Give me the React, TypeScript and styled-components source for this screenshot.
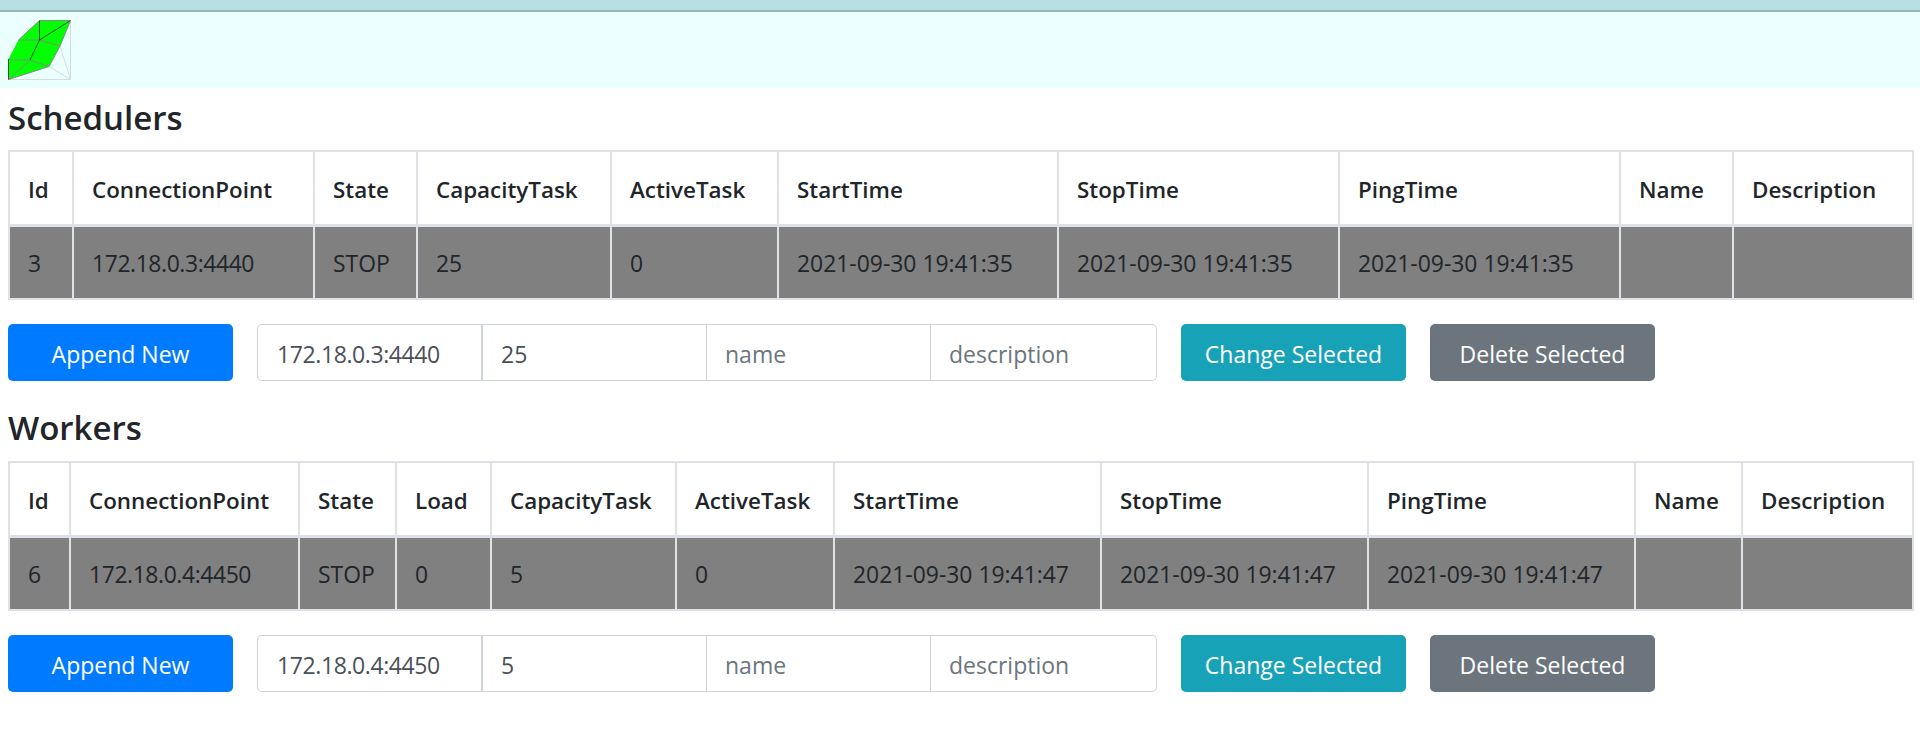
import React from 'react'
import styled, { createGlobalStyle } from 'styled-components'

const GlobalStyle = createGlobalStyle`
  html, body {
    margin: 0;
    padding: 0;
    background: #fff;
    color: #212529;
    font-family: "Open Sans", "Noto Sans", sans-serif;
    font-size: 19.2px;
    line-height: 1.5;
  }
  * { box-sizing: border-box; }
`

const TopStrip = styled.div`
  height: 12px;
  background: #b8e0e4;
  border-bottom: 2px solid #95b5ba;
`

const Header = styled.header`
  height: 76px;
  padding: 8px 8px 0;
  background: #ebffff;
`

const Content = styled.main`
  padding: 0 8px;
`

const Title = styled.h3`
  margin: 0;
  height: 62px;
  padding-top: 6px;
  font-size: 33px;
  line-height: 48px;
  font-weight: 600;
`

const WorkersTitle = styled(Title)`
  height: 80px;
  padding-top: 23px;
`

const Table = styled.table`
  width: 1904px;
  table-layout: fixed;
  border-collapse: collapse;
  border: 2px solid #dee2e6;
`

const HeadCell = styled.th`
  height: 74px;
  padding: 5px 18px 0;
  border: 2px solid #dee2e6;
  border-bottom-width: 3px;
  text-align: left;
  font-size: 22.4px;
  font-weight: 600;
  white-space: nowrap;
`

const Cell = styled.td<{ $tight?: boolean }>`
  height: 74px;
  padding: 4px 18px 0;
  border: 2px solid #dee2e6;
  background: #808080;
  font-size: 22.9px;
  letter-spacing: ${p => (p.$tight ? '-0.4px' : 'normal')};
  white-space: nowrap;
`

const Controls = styled.div`
  display: flex;
  align-items: stretch;
  height: 57px;
  margin-top: 24px;
`

const Button = styled.button<{ $bg: string }>`
  width: 225px;
  padding: 3px 0 0;
  border: none;
  border-radius: 5px;
  background: ${p => p.$bg};
  color: #fff;
  font: inherit;
  font-size: 23px;
`

const InputGroup = styled.div`
  display: flex;
  width: 900px;
  margin: 0 24px;
`

const Input = styled.input<{ $width: number }>`
  width: ${p => p.$width}px;
  height: 100%;
  padding: 2px 18px 0;
  border: 1px solid #ced4da;
  border-left-width: 0;
  background: #fff;
  color: #495057;
  font: inherit;
  font-size: 23px;
  outline: none;

  &:first-child {
    padding-left: 19px;
    border-left-width: 1px;
    border-right-width: 2px;
    border-radius: 5px 0 0 5px;
    letter-spacing: -0.4px;
  }

  &:last-child {
    border-radius: 0 5px 5px 0;
  }

  &::placeholder {
    color: #6c757d;
    opacity: 1;
  }
`

const SecondButton = styled(Button)`
  margin-left: 24px;
`

const Logo = () => (
  <svg width="64" height="62" viewBox="0 0 64 62">
    <path d="M31.5 .5 H62.5 L52 26 L41 46.5 L.5 59.5 V39 L10.5 20 Z" fill="#00ff00" />
    <path
      d="M62.5 .5 V59.5 H.5 M52 26 L62.5 59.5 M41 46.5 L62.5 59.5"
      fill="none"
      stroke="#d6dcdc"
    />
    <path
      d="M31.5 .5 H62.5 L52 26 L41 46.5 L.5 59.5 M10.5 20 H31.5 L52 26 M.5 40 H22 L41 46.5 M22 40 L.5 59.5 M10.5 20 L31.5 .5"
      fill="none"
      stroke="#7d8f7d"
    />
    <path
      d="M31.5 .5 V20 L62.5 .5 M31.5 20 L22 40 M.5 59.5 V39"
      fill="none"
      stroke="#3d4a3d"
    />
  </svg>
)

type Column = { label: string; width: number }

type SectionProps = {
  columns: Column[]
  values: string[]
  address: string
  capacity: string
}

const Section = ({ columns, values, address, capacity }: SectionProps) => (
  <>
    <Table>
      <colgroup>
        {columns.map(c => <col key={c.label} style={{ width: c.width }} />)}
      </colgroup>
      <thead>
        <tr>
          {columns.map(c => <HeadCell key={c.label}>{c.label}</HeadCell>)}
        </tr>
      </thead>
      <tbody>
        <tr>
          {values.map((v, i) => <Cell key={i} $tight={i === 1}>{v}</Cell>)}
        </tr>
      </tbody>
    </Table>
    <Controls>
      <Button $bg="#007bff">Append New</Button>
      <InputGroup>
        <Input $width={226} defaultValue={address} />
        <Input $width={224} defaultValue={capacity} />
        <Input $width={224} placeholder="name" />
        <Input $width={226} placeholder="description" />
      </InputGroup>
      <Button $bg="#17a2b8">Change Selected</Button>
      <SecondButton $bg="#6c757d">Delete Selected</SecondButton>
    </Controls>
  </>
)

const schedulerColumns: Column[] = [
  { label: 'Id', width: 64 },
  { label: 'ConnectionPoint', width: 241 },
  { label: 'State', width: 103 },
  { label: 'CapacityTask', width: 194 },
  { label: 'ActiveTask', width: 167 },
  { label: 'StartTime', width: 280 },
  { label: 'StopTime', width: 281 },
  { label: 'PingTime', width: 281 },
  { label: 'Name', width: 113 },
  { label: 'Description', width: 180 },
]

const workerColumns: Column[] = [
  { label: 'Id', width: 61 },
  { label: 'ConnectionPoint', width: 229 },
  { label: 'State', width: 97 },
  { label: 'Load', width: 95 },
  { label: 'CapacityTask', width: 185 },
  { label: 'ActiveTask', width: 158 },
  { label: 'StartTime', width: 267 },
  { label: 'StopTime', width: 267 },
  { label: 'PingTime', width: 267 },
  { label: 'Name', width: 107 },
  { label: 'Description', width: 171 },
]

export default function App() {
  return (
    <>
      <GlobalStyle />
      <TopStrip />
      <Header><Logo /></Header>
      <Content>
        <Title>Schedulers</Title>
        <Section
          columns={schedulerColumns}
          values={['3', '172.18.0.3:4440', 'STOP', '25', '0', '2021-09-30 19:41:35', '2021-09-30 19:41:35', '2021-09-30 19:41:35', '', '']}
          address="172.18.0.3:4440"
          capacity="25"
        />
        <WorkersTitle>Workers</WorkersTitle>
        <Section
          columns={workerColumns}
          values={['6', '172.18.0.4:4450', 'STOP', '0', '5', '0', '2021-09-30 19:41:47', '2021-09-30 19:41:47', '2021-09-30 19:41:47', '', '']}
          address="172.18.0.4:4450"
          capacity="5"
        />
      </Content>
    </>
  )
}
